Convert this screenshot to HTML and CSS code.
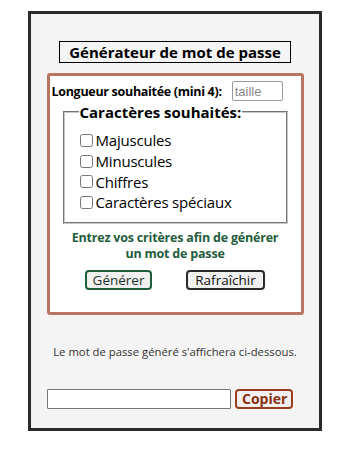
FILE: index.html
```html
<!DOCTYPE html>
<html lang="fr">

<head>
    <meta charset="UTF-8" />
    <title>Générateur de mot de passe</title>
    <meta name="viewport" content="width=device-width, initial-scale=1.0" />
    <link rel="stylesheet" href="styles.css">
</head>

<body>
    <div class="container">
        <h1 class="title">Générateur de mot de passe</h1>

        <div class="panel">
            <div class="length-row">
                <label for="taille">Longueur souhaitée (mini 4):</label>
                <input type="text" id="taille" placeholder="taille" />
            </div>

            <fieldset class="chars">
                <legend>Caractères souhaités:</legend>
                <label><input type="checkbox" /> Majuscules</label>
                <label><input type="checkbox" /> Minuscules</label>
                <label><input type="checkbox" /> Chiffres</label>
                <label><input type="checkbox" /> Caractères spéciaux</label>
            </fieldset>

            <p class="hint">Entrez vos critères afin de générer un mot de passe</p>

            <div class="actions">
                <button class="btn-generate">Générer</button>
                <button class="btn-refresh">Rafraîchir</button>
            </div>
        </div>

        <p class="info">Le mot de passe généré s'affichera ci-dessous.</p>

        <div class="result-row">
            <input type="text" id="resultat" />
            <button class="btn-copy">Copier</button>
        </div>
    </div>
</body>

</html>
```

FILE: styles.css
```css
body {
    margin: 0;
    padding: 11px 0 0 28px;
    font-family: 'Open Sans', sans-serif;
    background-color: #fff;
    color: #000;
}

.container {
    width: 288px;
    height: 414px;
    background-color: #f4f4f4;
    border: 3px solid #2a2a2a;
    box-sizing: content-box;
}

.title {
    width: 230px;
    margin: 27px auto 0;
    border: 1px solid #000;
    font-size: 15px;
    font-weight: 700;
    line-height: 20px;
    text-align: center;
}

/* Bloc des critères */
.panel {
    width: 251px;
    margin: 10px auto 0;
    padding: 5px 0 22px;
    background-color: #fff;
    border: 3px solid #b97561;
    border-radius: 3px;
}

.length-row {
    display: flex;
    align-items: center;
    padding-left: 2px;
    font-size: 12.5px;
    font-weight: 700;
    letter-spacing: -0.3px;
}

.length-row input {
    width: 45px;
    height: 16px;
    margin-left: 10px;
    padding: 1px 2px;
    border: 1px solid #999;
    border-radius: 2px;
    font-family: 'Liberation Sans', sans-serif;
    font-size: 13px;
}

.length-row input::placeholder {
    color: #8a8a8a;
}

.chars {
    width: 191px;
    margin: 1px auto 0;
    padding: 8px 15px 9px;
    border: 2px groove #c8c8c8;
}

.chars legend {
    margin-left: -1px;
    padding: 0 1px;
    font-size: 15px;
    font-weight: 700;
    line-height: 20px;
}

.chars label {
    display: flex;
    align-items: center;
    height: 20.7px;
    font-size: 15px;
    letter-spacing: -0.2px;
}

.chars input {
    width: 13px;
    height: 13px;
    margin: 0 3px 0 0;
}

.hint {
    margin: 6px 0 0;
    padding: 0 15px;
    color: #1f5d3d;
    font-size: 12.5px;
    font-weight: 700;
    line-height: 16px;
    letter-spacing: -0.2px;
    text-align: center;
}

.actions {
    display: flex;
    justify-content: center;
    gap: 34px;
    margin-top: 8px;
}

button {
    padding: 0 5px;
    height: 20px;
    font-family: 'Open Sans', sans-serif;
    font-size: 13.5px;
    line-height: 16px;
    background: #f0f0f0;
    border-radius: 4px;
    cursor: pointer;
}

.btn-generate {
    width: 67px;
    border: 2px solid #1f5d3d;
    color: #1c3528;
}

.btn-refresh {
    width: 79px;
    border: 2px solid #2a2a2a;
    color: #111;
}

.info {
    margin: 29px 0 0;
    font-size: 11.3px;
    color: #333;
    text-align: center;
}

.result-row {
    display: flex;
    gap: 4px;
    margin: 30px 0 0 16px;
}

.result-row input {
    width: 180px;
    height: 16px;
    padding: 1px;
    border: 1px solid #767676;
    border-radius: 1px;
    background: #fff;
}

.btn-copy {
    width: 58px;
    border: 2px solid #9c3d1c;
    color: #8b2f12;
    font-size: 14px;
    font-weight: 700;
}
```
